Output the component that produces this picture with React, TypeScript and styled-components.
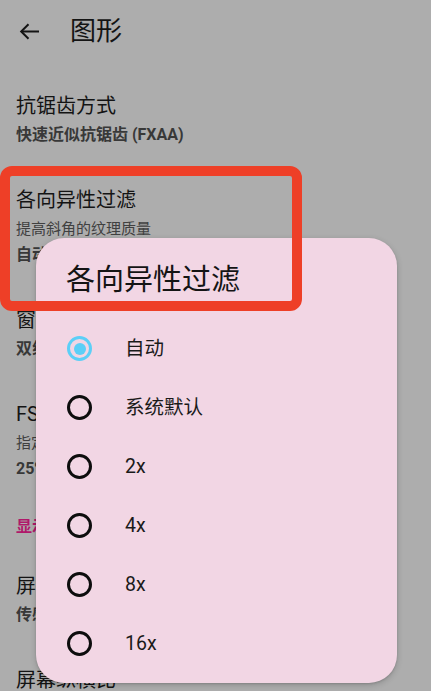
import React from "react";
import styled, { createGlobalStyle } from "styled-components";

const GlobalStyle = createGlobalStyle`
  html, body { margin: 0; padding: 0; background: #adadad; }
  body { font-family: Roboto, "Noto Sans CJK SC", "Noto Sans", sans-serif; }
  * { box-sizing: border-box; }
`;

const Screen = styled.div`
  position: relative;
  width: 431px;
  height: 691px;
  overflow: hidden;
  background: #adadad;
`;

const TopBar = styled.div`
  height: 62px;
  display: flex;
  align-items: center;
  padding-left: 19px;
`;

const BackButton = styled.div`
  width: 22px;
  height: 18px;
  display: flex;
  align-items: center;
  color: #141414;
`;

const PageTitle = styled.div`
  margin-left: 29px;
  font-size: 26px;
  line-height: 34px;
  color: #141414;
`;

const List = styled.div`
  padding-top: 10px;
`;

const Item = styled.div`
  padding: 20px 16px 20px;
  display: flex;
  flex-direction: column;
`;

const ItemTitle = styled.div`
  font-size: 20px;
  line-height: 28px;
  color: #141414;
  white-space: nowrap;
`;

const ItemDesc = styled.div`
  margin-top: 5px;
  font-size: 15px;
  line-height: 20px;
  color: #404040;
  white-space: nowrap;
`;

const ItemValue = styled.div<{ $afterDesc?: boolean }>`
  margin-top: ${(p) => (p.$afterDesc ? "5px" : "4px")};
  font-size: 16px;
  line-height: 22px;
  font-weight: 700;
  color: #383838;
  white-space: nowrap;
`;

const SectionHeading = styled.div`
  padding: 15px 16px 13px;
  font-size: 16px;
  line-height: 24px;
  font-weight: 700;
  color: #b0186a;
`;

const Dialog = styled.div`
  position: absolute;
  left: 36px;
  top: 238px;
  width: 361px;
  height: 445px;
  border-radius: 28px;
  background: #f2d6e4;
  box-shadow: 0 2px 6px rgba(0, 0, 0, 0.18), 0 1px 2px rgba(0, 0, 0, 0.12);
  padding: 24px 0 10px;
  display: flex;
  flex-direction: column;
`;

const DialogTitle = styled.div`
  padding-left: 30px;
  margin-bottom: 21px;
  font-size: 29px;
  line-height: 36px;
  color: #141414;
`;

const OptionRow = styled.div`
  height: 59px;
  display: flex;
  align-items: center;
  padding-left: 31px;
`;

const Radio = styled.span<{ $checked?: boolean }>`
  width: 25px;
  height: 25px;
  border-radius: 50%;
  border: 3px solid ${(p) => (p.$checked ? "#5ccff7" : "#0d0d0d")};
  display: flex;
  align-items: center;
  justify-content: center;
  flex: none;
  &::after {
    content: "";
    display: ${(p) => (p.$checked ? "block" : "none")};
    width: 12px;
    height: 12px;
    border-radius: 50%;
    background: #5ccff7;
  }
`;

const OptionLabel = styled.span`
  margin-left: 33px;
  font-size: 19.5px;
  line-height: 26px;
  color: #1a1a1a;
`;

const Highlight = styled.div`
  position: absolute;
  left: 0;
  top: 166px;
  width: 302px;
  height: 145px;
  border: 10.5px solid #ee3f27;
  border-radius: 12px;
  pointer-events: none;
`;

type Setting = { title: string; desc?: string; value: string };

const settingsTop: Setting[] = [
  { title: "抗锯齿方式", value: "快速近似抗锯齿 (FXAA)" },
  { title: "各向异性过滤", desc: "提高斜角的纹理质量", value: "自动" },
  { title: "窗口适应过滤器", value: "双线性" },
  { title: "FSR 锐化度", desc: "指定使用 FSR 时图像的锐化程度", value: "25%" },
];

const settingsDisplay: Setting[] = [
  { title: "屏幕方向", value: "传感器横屏" },
  { title: "屏幕纵横比", value: "默认 (16:9)" },
];

const options = ["自动", "系统默认", "2x", "4x", "8x", "16x"];

function SettingItem({ s }: { s: Setting }) {
  return (
    <Item>
      <ItemTitle>{s.title}</ItemTitle>
      {s.desc && <ItemDesc>{s.desc}</ItemDesc>}
      <ItemValue $afterDesc={!!s.desc}>{s.value}</ItemValue>
    </Item>
  );
}

export default function App() {
  return (
    <>
      <GlobalStyle />
      <Screen>
        <TopBar>
          <BackButton>
            <svg width="21" height="17" viewBox="0 0 21 17" fill="none">
              <path d="M20 8.5H2.5" stroke="currentColor" strokeWidth="2" />
              <path d="M9.5 1.3L2.2 8.5l7.3 7.2" stroke="currentColor" strokeWidth="2" />
            </svg>
          </BackButton>
          <PageTitle>图形</PageTitle>
        </TopBar>
        <List>
          {settingsTop.map((s) => (
            <SettingItem key={s.title} s={s} />
          ))}
          <SectionHeading>显示</SectionHeading>
          {settingsDisplay.map((s) => (
            <SettingItem key={s.title} s={s} />
          ))}
        </List>
        <Dialog>
          <DialogTitle>各向异性过滤</DialogTitle>
          {options.map((o, i) => (
            <OptionRow key={o}>
              <Radio $checked={i === 0} />
              <OptionLabel>{o}</OptionLabel>
            </OptionRow>
          ))}
        </Dialog>
        <Highlight />
      </Screen>
    </>
  );
}
